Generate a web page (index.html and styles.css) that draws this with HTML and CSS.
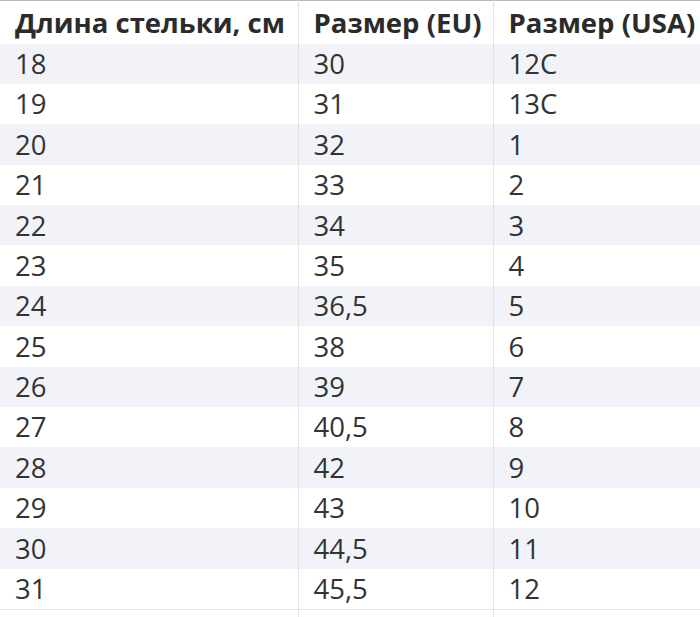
FILE: index.html
```html
<!DOCTYPE html>
<html lang="ru">
<head>
<meta charset="utf-8">
<link rel="stylesheet" href="styles.css">
</head>
<body>
<table class="sizes">
  <colgroup><col class="c1"><col class="c2"><col class="c3"></colgroup>
  <thead>
    <tr><th>Длина стельки, см</th><th>Размер (EU)</th><th>Размер (USA)</th></tr>
  </thead>
  <tbody>
    <tr><td>18</td><td>30</td><td>12C</td></tr>
    <tr><td>19</td><td>31</td><td>13C</td></tr>
    <tr><td>20</td><td>32</td><td>1</td></tr>
    <tr><td>21</td><td>33</td><td>2</td></tr>
    <tr><td>22</td><td>34</td><td>3</td></tr>
    <tr><td>23</td><td>35</td><td>4</td></tr>
    <tr><td>24</td><td>36,5</td><td>5</td></tr>
    <tr><td>25</td><td>38</td><td>6</td></tr>
    <tr><td>26</td><td>39</td><td>7</td></tr>
    <tr><td>27</td><td>40,5</td><td>8</td></tr>
    <tr><td>28</td><td>42</td><td>9</td></tr>
    <tr><td>29</td><td>43</td><td>10</td></tr>
    <tr><td>30</td><td>44,5</td><td>11</td></tr>
    <tr><td>31</td><td>45,5</td><td>12</td></tr>
    <tr class="last"><td></td><td></td><td></td></tr>
  </tbody>
</table>
</body>
</html>
```
FILE: styles.css
```css
html, body {
  margin: 0;
  padding: 0;
  background: #fff;
}
.sizes {
  width: 720px;
  table-layout: fixed;
  border-collapse: collapse;
  font-family: "Open Sans", "Noto Sans", sans-serif;
  font-size: 27.5px;
  color: #333;
  border-top: 1px solid #b8b8b8;
}
.c1 { width: 298px; }
.c2 { width: 195px; }
.c3 { width: 227px; }
.sizes th, .sizes td {
  text-align: left;
  padding: 0 0 0 15px;
  white-space: nowrap;
  border-left: 1px solid #e2e2e2;
  line-height: 1;
}
.sizes th:first-child, .sizes td:first-child { border-left: none; }
.sizes th {
  font-weight: 700;
  height: 42.5px;
  color: #2b2b2b;
}
.sizes td {
  height: 40.4px;
  font-weight: 400;
}
.sizes tbody tr:nth-child(odd) { background: #f2f3f8; }
.sizes tbody tr.last { background: #fff; }
.sizes tbody tr.last td { border-top: 1px solid #e2e2e2; height: 10px; }
```
